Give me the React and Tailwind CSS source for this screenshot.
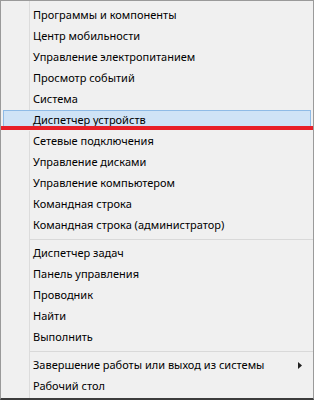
const groups = [
  [
    "Программы и компоненты",
    "Центр мобильности",
    "Управление электропитанием",
    "Просмотр событий",
    "Система",
    "Диспетчер устройств",
    "Сетевые подключения",
    "Управление дисками",
    "Управление компьютером",
    "Командная строка",
    "Командная строка (администратор)",
  ],
  ["Диспетчер задач", "Панель управления", "Проводник", "Найти", "Выполнить"],
  ["Завершение работы или выход из системы", "Рабочий стол"],
];

function Item({ label, active, submenu }) {
  if (active) {
    return (
      <div className="flex h-[21px] items-center px-[2px]">
        <div className="flex h-[20px] flex-1 items-center border border-[#8fbbe6] bg-[#cfe3f6] pl-[29px]">
          <span>{label}</span>
        </div>
      </div>
    );
  }
  return (
    <div className="flex h-[21px] items-stretch">
      <div className="w-[29px] shrink-0 border-r border-[#dcdcdc]" />
      <div className="flex flex-1 items-center pl-[3px] pr-[11px]">
        <span className="flex-1">{label}</span>
        {submenu && (
          <svg width="4" height="7" viewBox="0 0 4 7">
            <path d="M0 0 L4 3.5 L0 7 Z" fill="#222" />
          </svg>
        )}
      </div>
    </div>
  );
}

function Separator() {
  return (
    <div className="flex h-[7px] items-stretch">
      <div className="w-[29px] shrink-0 border-r border-[#dcdcdc]" />
      <div className="flex-1 pt-[3px]">
        <div className="h-px bg-[#d9d9d9]" />
      </div>
    </div>
  );
}

export default function App() {
  return (
    <div
      className="relative h-[400px] w-[314px] overflow-hidden border-x border-t border-b-2 border-x-[#9a9a9a] border-t-[#9a9a9a] border-b-[#3c3c3c] bg-[#f0f0f0] text-[11px] text-black"
      style={{ fontFamily: '"Noto Sans", "Open Sans", sans-serif' }}
    >
      <div className="flex h-full flex-col">
        <div className="h-[3.5px] flex items-stretch">
          <div className="w-[29px] shrink-0 border-r border-[#dcdcdc]" />
        </div>
        {groups.map((items, gi) => (
          <div key={gi}>
            {gi > 0 && <Separator />}
            {items.map((label) => (
              <Item
                key={label}
                label={label}
                active={label === "Диспетчер устройств"}
                submenu={label.startsWith("Завершение")}
              />
            ))}
          </div>
        ))}
        <div className="flex flex-1 items-stretch">
          <div className="w-[29px] shrink-0 border-r border-[#dcdcdc]" />
        </div>
      </div>

      {/* red underline annotation */}
      <div className="absolute left-0 right-0 top-[125px] h-[4px] bg-[#e81f28]" />
    </div>
  );
}
